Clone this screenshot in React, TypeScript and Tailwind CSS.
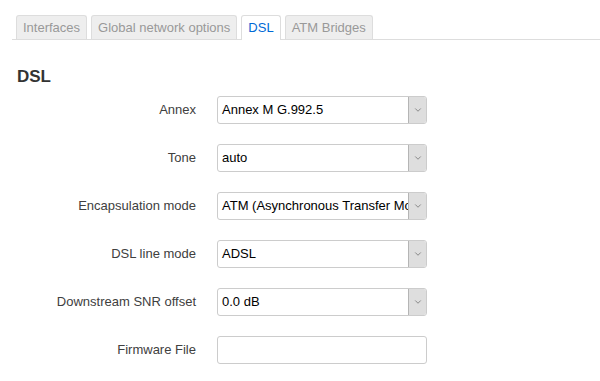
import { ChevronDown } from 'lucide-react';

const tabs = [
  { label: 'Interfaces', active: false },
  { label: 'Global network options', active: false },
  { label: 'DSL', active: true },
  { label: 'ATM Bridges', active: false },
];

const rows: { label: string; value?: string; select: boolean }[] = [
  { label: 'Annex', value: 'Annex M G.992.5', select: true },
  { label: 'Tone', value: 'auto', select: true },
  { label: 'Encapsulation mode', value: 'ATM (Asynchronous Transfer Mode)', select: true },
  { label: 'DSL line mode', value: 'ADSL', select: true },
  { label: 'Downstream SNR offset', value: '0.0 dB', select: true },
  { label: 'Firmware File', select: false },
];

function SelectBox({ value }: { value: string }) {
  return (
    <div className="flex h-[28px] w-[210px] overflow-hidden rounded-[3px] border border-[#ccc] bg-white">
      <span className="min-w-0 flex-1 overflow-hidden whitespace-nowrap pl-[4px] leading-[26px] text-[#000]">{value}</span>
      <span className="flex w-[18px] items-center justify-center border-l border-[#b5b5b5] bg-[#dedede]">
        <ChevronDown className="h-[10px] w-[10px] text-[#555]" strokeWidth={1.5} />
      </span>
    </div>
  );
}

export default function App() {
  return (
    <div className="h-[381px] w-[600px] overflow-hidden bg-white font-['Liberation_Sans',Arial,sans-serif] text-[13px]">
      <div className="pl-[12px] pt-[15px]">
        <ul className="flex gap-[4px] border-b border-[#ddd] pl-[4px]">
          {tabs.map((t) => (
            <li
              key={t.label}
              className={
                t.active
                  ? '-mb-px h-[25px] rounded-t-[3px] border border-b-0 border-[#ddd] bg-white px-[6px] leading-[24px] text-[#0069d6]'
                  : 'h-[24px] rounded-t-[3px] border border-b-0 border-[#ddd] bg-[#eee] px-[6px] leading-[24px] text-[#999]'
              }
            >
              {t.label}
            </li>
          ))}
        </ul>
      </div>

      <h2 className="mt-[27px] pl-[17px] text-[17px] font-bold leading-[20px] text-[#333]">DSL</h2>

      <div className="mt-[9px] flex flex-col gap-[20px]">
        {rows.map((r) => (
          <div key={r.label} className="flex items-center">
            <label className="w-[196px] text-right text-[#404040]">{r.label}</label>
            <div className="ml-[21px]">
              {r.select ? (
                <SelectBox value={r.value ?? ''} />
              ) : (
                <div className="h-[28px] w-[210px] rounded-[3px] border border-[#ccc] bg-white" />
              )}
            </div>
          </div>
        ))}
      </div>
    </div>
  );
}
